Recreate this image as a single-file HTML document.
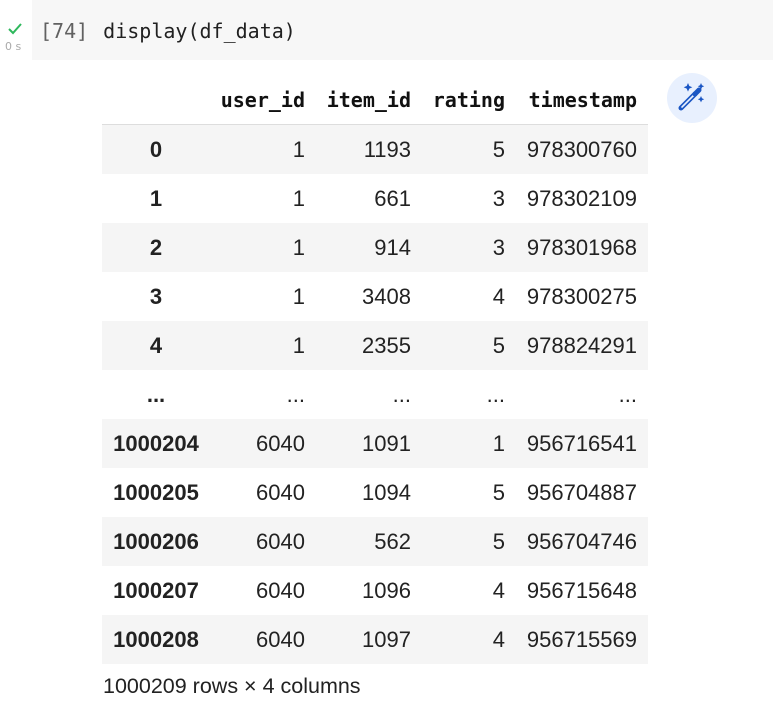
<!DOCTYPE html>
<html><head><style>
body{margin:0;width:773px;height:709px;background:#fff;position:relative;overflow:hidden;font-family:"Liberation Sans",Arial,sans-serif;}
.cell{position:absolute;left:32px;top:0;width:741px;height:60px;background:#f7f7f7;}
.code{position:absolute;left:40px;top:19px;font-family:"DejaVu Sans Mono","Liberation Mono",monospace;font-size:20px;color:#212121;white-space:pre;}
.code .n{color:#616161;margin-right:15px;}
.chk{position:absolute;left:7px;top:22px;}
.t0{position:absolute;left:5px;top:40px;font-size:11px;color:#aaa;font-family:"DejaVu Sans",sans-serif;}
table{position:absolute;left:102px;top:76px;border-collapse:collapse;font-size:22px;color:#222;table-layout:fixed;width:546px;}
th{font-family:"DejaVu Sans Mono",monospace;font-weight:bold;font-size:20px;height:48px;text-align:right;padding:0 11px 0 0;border-bottom:1px solid #ddd;color:#111;}
td{height:49px;text-align:right;padding:0 11px 0 0;}
td.i{text-align:center;font-weight:bold;padding:0;}
tr.s td{background:#f5f5f5;}
.magic{position:absolute;left:667px;top:73px;width:50px;height:50px;border-radius:50%;background:#e8f0fe;}
.foot{position:absolute;left:103px;top:674px;font-size:21.5px;color:#222;}
</style></head><body>
<div class="cell"></div>
<svg class="chk" width="16" height="14" viewBox="0 0 16 14"><path d="M2 7 L6 11 L14 2" stroke="#2eb85c" stroke-width="2" fill="none"/></svg>
<div class="t0">0 s</div>
<div class="code"><span class="n">[74]</span>display(df_data)</div>
<table>
<colgroup><col style="width:108px"><col style="width:106px"><col style="width:106px"><col style="width:94px"><col style="width:132px"></colgroup>
<tr><th></th><th>user_id</th><th>item_id</th><th>rating</th><th>timestamp</th></tr>
<tr class="s"><td class="i">0</td><td>1</td><td>1193</td><td>5</td><td>978300760</td></tr>
<tr><td class="i">1</td><td>1</td><td>661</td><td>3</td><td>978302109</td></tr>
<tr class="s"><td class="i">2</td><td>1</td><td>914</td><td>3</td><td>978301968</td></tr>
<tr><td class="i">3</td><td>1</td><td>3408</td><td>4</td><td>978300275</td></tr>
<tr class="s"><td class="i">4</td><td>1</td><td>2355</td><td>5</td><td>978824291</td></tr>
<tr><td class="i">...</td><td>...</td><td>...</td><td>...</td><td>...</td></tr>
<tr class="s"><td class="i">1000204</td><td>6040</td><td>1091</td><td>1</td><td>956716541</td></tr>
<tr><td class="i">1000205</td><td>6040</td><td>1094</td><td>5</td><td>956704887</td></tr>
<tr class="s"><td class="i">1000206</td><td>6040</td><td>562</td><td>5</td><td>956704746</td></tr>
<tr><td class="i">1000207</td><td>6040</td><td>1096</td><td>4</td><td>956715648</td></tr>
<tr class="s"><td class="i">1000208</td><td>6040</td><td>1097</td><td>4</td><td>956715569</td></tr>
</table>
<div class="magic"><svg width="50" height="50" viewBox="0 0 50 50">
<path d="M14 35 L28 21" stroke="#1a56c4" stroke-width="5" stroke-linecap="round"/>
<path d="M15 34 L28 21" stroke="#e8f0fe" stroke-width="1.6" stroke-linecap="round"/>
<path d="M28 21 L32 17" stroke="#1a56c4" stroke-width="5" stroke-linecap="round"/>
<path d="M21 10 l1.3 3 3 1.3 -3 1.3 -1.3 3 -1.3 -3 -3 -1.3 3 -1.3z M34 10 l1 2.2 2.2 1 -2.2 1 -1 2.2 -1 -2.2 -2.2 -1 2.2 -1z M34 23 l1 2.2 2.2 1 -2.2 1 -1 2.2 -1 -2.2 -2.2 -1 2.2 -1z" fill="#1a56c4"/>
</svg></div>
<div class="foot">1000209 rows × 4 columns</div>
</body></html>
